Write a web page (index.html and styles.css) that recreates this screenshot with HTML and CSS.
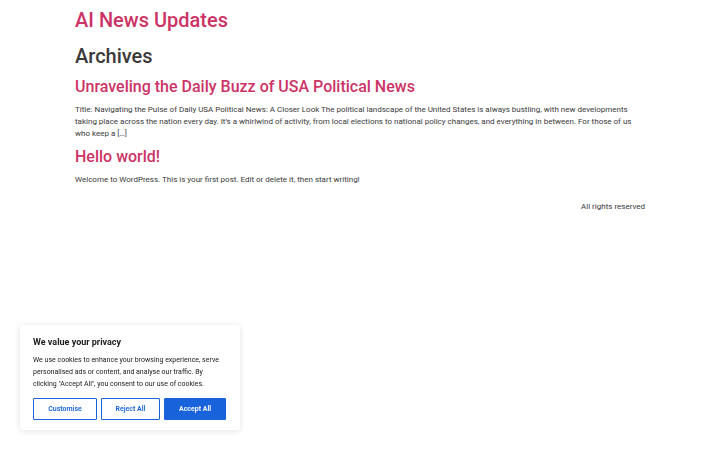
FILE: index.html
```html
<!DOCTYPE html>
<html lang="en">
<head>
    <meta charset="UTF-8">
    <meta name="viewport" content="width=device-width, initial-scale=1.0">
    <title>Archives - AI News Updates</title>
    <link rel="stylesheet" href="styles.css">
</head>
<body>
    <header class="site-header">
        <a class="site-title" href="#">AI News Updates</a>
    </header>

    <main class="site-main">
        <h1 class="page-title">Archives</h1>

        <article class="post">
            <h2 class="entry-title"><a href="#">Unraveling the Daily Buzz of USA Political News</a></h2>
            <p>Title: Navigating the Pulse of Daily USA Political News: A Closer Look The political landscape of the United States is always bustling, with new developments taking place across the nation every day. It&rsquo;s a whirlwind of activity, from local elections to national policy changes, and everything in between. For those of us who keep a [&hellip;]</p>
        </article>

        <article class="post">
            <h2 class="entry-title"><a href="#">Hello world!</a></h2>
            <p>Welcome to WordPress. This is your first post. Edit or delete it, then start writing!</p>
        </article>
    </main>

    <footer class="site-footer">
        <p>All rights reserved</p>
    </footer>

    <div class="cky-consent">
        <p class="cky-title">We value your privacy</p>
        <p class="cky-notice">We use cookies to enhance your browsing experience, serve personalised ads or content, and analyse our traffic. By clicking "Accept All", you consent to our use of cookies.</p>
        <div class="cky-buttons">
            <button class="cky-btn">Customise</button>
            <button class="cky-btn">Reject All</button>
            <button class="cky-btn cky-btn-accept">Accept All</button>
        </div>
    </div>
</body>
</html>
```

FILE: styles.css
```css
body {
    margin: 0;
    font-family: Roboto, "Liberation Sans", sans-serif;
    font-size: 8px;
    line-height: 1.5;
    color: #3a3a3a;
    background: #fff;
}
a {
    color: #c36;
    text-decoration: none;
}
.site-header,
.site-main,
.site-footer {
    width: 570px;
    margin: 0 auto;
}
.site-header {
    padding-top: 8px;
}
.site-title {
    font-size: 20px;
    font-weight: 500;
    line-height: 24px;
    display: inline-block;
}
.page-title {
    font-size: 20px;
    font-weight: 500;
    line-height: 24px;
    margin: 12px 0 9px;
}
.entry-title {
    font-size: 16px;
    font-weight: 500;
    line-height: 20px;
    margin: 0 0 7px;
}
.post p {
    margin: 0 0 7px;
}
.site-footer {
    text-align: right;
    padding-top: 8px;
}
.site-footer p {
    margin: 0;
}

/* cookie banner */
.cky-consent {
    position: fixed;
    left: 20px;
    bottom: 20px;
    width: 220px;
    box-sizing: border-box;
    padding: 11px 13px 10px;
    background: #fff;
    border-radius: 3px;
    box-shadow: 0 1px 6px rgba(0, 0, 0, 0.12);
}
.cky-title {
    margin: 0 0 5px;
    font-size: 9px;
    font-weight: 700;
    color: #212121;
}
.cky-notice {
    margin: 0 0 8px;
    font-size: 7px;
    line-height: 12px;
    color: #212121;
}
.cky-buttons {
    display: flex;
    gap: 4px;
}
.cky-btn {
    height: 22px;
    padding: 0;
    font-family: inherit;
    font-size: 7px;
    font-weight: 600;
    color: #1863dc;
    background: #fff;
    border: 1px solid #1863dc;
    border-radius: 1px;
    cursor: pointer;
}
.cky-btn:nth-child(1) { width: 64px; }
.cky-btn:nth-child(2) { width: 59px; }
.cky-btn-accept {
    width: 62px;
    color: #fff;
    background: #1863dc;
}
```
